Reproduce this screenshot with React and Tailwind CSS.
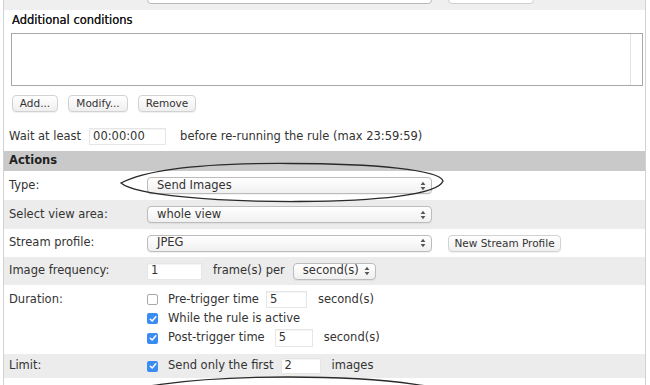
import React from "react";

function Arrows() {
  return (
    <svg width="6" height="10" viewBox="0 0 6 10">
      <path d="M3 0.8 L5.4 3.9 H0.6Z M3 9.2 L5.4 6.1 H0.6Z" fill="#555" />
    </svg>
  );
}

function Select({ w, text }) {
  return (
    <div
      className={`flex items-center justify-between h-[17px] ${w} rounded-[4px] border border-[#bcbcbc] bg-gradient-to-b from-white to-[#f0f0f0] pl-[9px] pr-[5px] shadow-[0_1px_1px_rgba(0,0,0,0.06)]`}
    >
      <span className="leading-none">{text}</span>
      <Arrows />
    </div>
  );
}

function Btn({ w, children }) {
  return (
    <div
      className={`flex items-center justify-center h-[17px] ${w} rounded-[4px] border border-[#d2d2d2] bg-gradient-to-b from-white to-[#efefef] text-[10.5px] leading-none text-[#333] shadow-[0_1px_1px_rgba(0,0,0,0.06)]`}
    >
      {children}
    </div>
  );
}

function Input({ w, h = "h-[17px]", value }) {
  return (
    <div
      className={`flex items-center ${w} ${h} border border-[#e6e6e6] bg-white pl-[3px] shadow-[inset_0_1px_1px_rgba(0,0,0,0.05)] leading-none`}
    >
      {value}
    </div>
  );
}

function Check({ on }) {
  if (!on)
    return (
      <div className="w-[11px] h-[11px] rounded-[2px] border border-[#a9a9a9] bg-white shrink-0" />
    );
  return (
    <div className="w-[11px] h-[11px] rounded-[2px] bg-[#3b8cf2] flex items-center justify-center shrink-0">
      <svg width="8" height="8" viewBox="0 0 8 8">
        <path d="M1.3 4.2 L3.2 6 L6.8 1.8" stroke="white" strokeWidth="1.5" fill="none" strokeLinecap="round" strokeLinejoin="round" />
      </svg>
    </div>
  );
}

function Row({ label, gray, h, children }) {
  return (
    <div className={`flex items-center ${h} ${gray ? "bg-[#ececec]" : "bg-white"}`}>
      <div className="w-[143px] pl-[5px] shrink-0">{label}</div>
      <div className="flex items-center">{children}</div>
    </div>
  );
}

export default function App() {
  return (
    <div className="relative w-[650px] h-[385px] overflow-hidden bg-white font-['DejaVu_Sans',sans-serif] text-[11.5px] text-[#333]">
      <div className="ml-[3px] w-[643px] h-[385px] border-x border-[#d2d2d2]">
        {/* top band */}
        <div className="h-[10px] bg-[#efefef] flex items-end pb-[6px]">
          <div className="ml-[143px] w-[285px] h-[18px] shrink-0 rounded-[4px] border border-[#b9b9b9] bg-white" />
          <div className="ml-[16px] w-[86px] h-[18px] shrink-0 rounded-[4px] border border-[#cfcfcf] bg-white" />
        </div>

        <div className="mt-[3px] pl-[8px] h-[14px] leading-[14px] text-[#1a1a1a] [text-shadow:0_0_0.3px_#1a1a1a]">Additional conditions</div>

        <div className="mt-[6px] ml-[7px] w-[632px] h-[53px] border border-[#a8a8a8] bg-white flex justify-end">
          <div className="w-[12px] h-full border-l border-[#e2e2e2]" />
        </div>

        <div className="mt-[9px] ml-[8px] flex gap-[10px]">
          <Btn w="w-[46px]">Add...</Btn>
          <Btn w="w-[60px]">Modify...</Btn>
          <Btn w="w-[58px]">Remove</Btn>
        </div>

        <div className="mt-[16px] pl-[5px] flex items-center h-[17px]">
          <span>Wait at least</span>
          <div className="ml-[8px]">
            <Input w="w-[77px]" value="00:00:00" />
          </div>
          <span className="ml-[14px]">before re-running the rule (max 23:59:59)</span>
        </div>

        <div className="mt-[6px] h-[20px] bg-[#c9c9c9] pl-[5px] flex items-center font-bold text-[#222]">
          Actions
        </div>

        <Row label="Type:" h="h-[29px]">
          <Select w="w-[285px]" text="Send Images" />
        </Row>
        <Row label="Select view area:" h="h-[29px]" gray>
          <Select w="w-[285px]" text="whole view" />
        </Row>
        <Row label="Stream profile:" h="h-[28px]">
          <Select w="w-[285px]" text="JPEG" />
          <div className="ml-[16px]">
            <Btn w="w-[113px]">New Stream Profile</Btn>
          </div>
        </Row>
        <Row label="Image frequency:" h="h-[28px]" gray>
          <Input w="w-[55px]" value="1" />
          <span className="ml-[11px]">frame(s) per</span>
          <div className="ml-[8px]">
            <Select w="w-[83px]" text="second(s)" />
          </div>
        </Row>

        <div className="flex h-[69px] bg-white pt-[5px]">
          <div className="w-[143px] pl-[5px] shrink-0 h-[19px] flex items-center">Duration:</div>
          <div className="flex flex-col">
            <div className="flex items-center h-[19px]">
              <Check />
              <span className="ml-[10px]">Pre-trigger time</span>
              <div className="ml-[7px]">
                <Input w="w-[41px]" value="5" />
              </div>
              <span className="ml-[11px]">second(s)</span>
            </div>
            <div className="flex items-center h-[19px]">
              <Check on />
              <span className="ml-[10px]">While the rule is active</span>
            </div>
            <div className="flex items-center h-[20px]">
              <Check on />
              <span className="ml-[10px]">Post-trigger time</span>
              <div className="ml-[10px]">
                <Input w="w-[38px]" h="h-[18px]" value="5" />
              </div>
              <span className="ml-[11px]">second(s)</span>
            </div>
          </div>
        </div>

        <Row label="Limit:" h="h-[24px]" gray>
          <Check on />
          <span className="ml-[10px]">Send only the first</span>
          <div className="ml-[7px]">
            <Input w="w-[40px]" h="h-[16px]" value="2" />
          </div>
          <span className="ml-[11px]">images</span>
        </Row>
      </div>

      <svg className="absolute inset-0 pointer-events-none" width="650" height="385" viewBox="0 0 650 385">
        <path
          d="M290 163.5 C215 163, 150 168, 121 183 C135 195, 215 202, 300 201.5 C375 201, 438 195, 443 181 C440 170, 375 163.5, 290 163.5 Z"
          fill="none"
          stroke="#2a2a2a"
          strokeWidth="1.3"
        />
        <ellipse cx="288" cy="402" rx="180" ry="25" fill="none" stroke="#2a2a2a" strokeWidth="1.3" />
      </svg>
    </div>
  );
}
